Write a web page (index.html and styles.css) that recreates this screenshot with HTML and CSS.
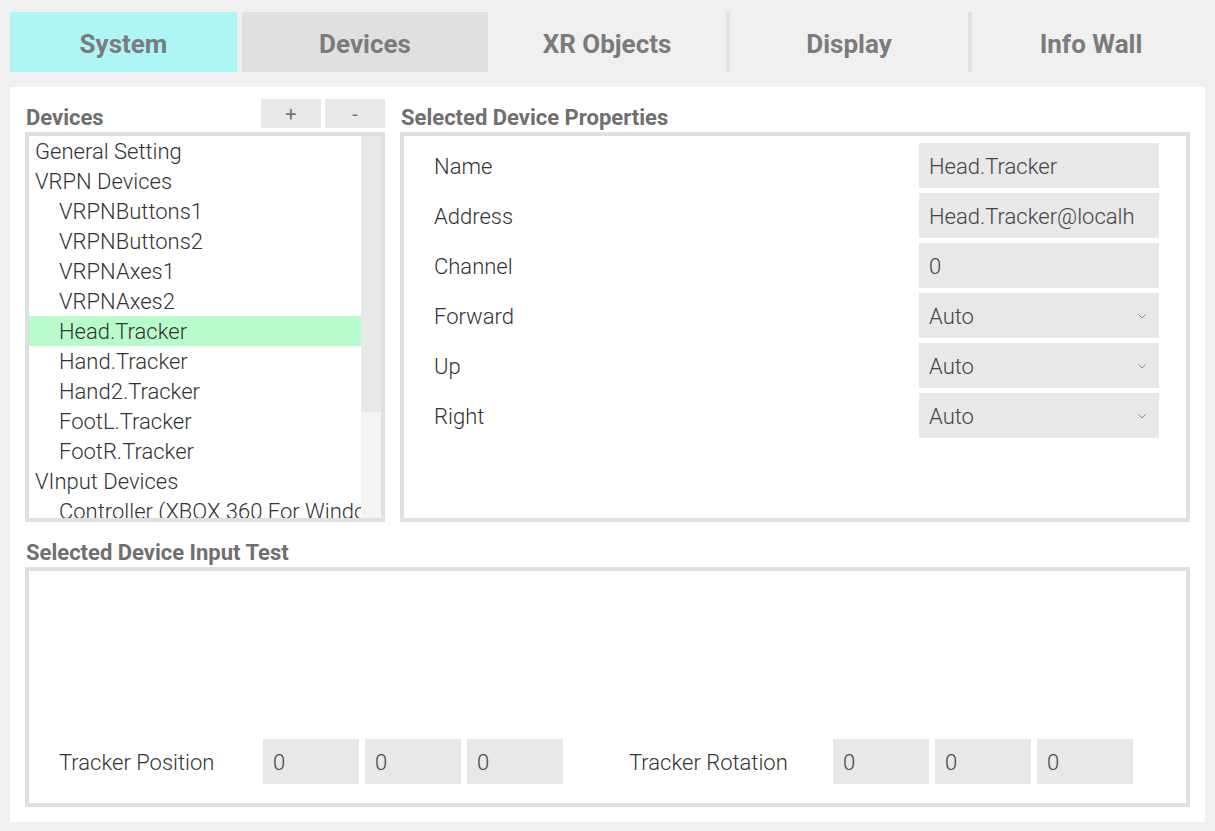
FILE: index.html
```html
<!DOCTYPE html>
<html>
<head>
<meta charset="utf-8">
<title>Settings</title>
<link rel="stylesheet" href="styles.css">
</head>
<body>
<div class="tabs">
  <div class="tab tab-system">System</div>
  <div class="tab tab-devices">Devices</div>
  <div class="tab tab-plain">XR Objects</div>
  <div class="tab-sep"></div>
  <div class="tab tab-plain">Display</div>
  <div class="tab-sep"></div>
  <div class="tab tab-plain">Info Wall</div>
</div>

<div class="main">
  <div class="top">
    <div class="left-col">
      <div class="col-head">
        <div class="heading">Devices</div>
        <div class="btns">
          <div class="btn">+</div>
          <div class="btn">-</div>
        </div>
      </div>
      <div class="list-box">
        <div class="list">
          <div class="item l0">General Setting</div>
          <div class="item l0">VRPN Devices</div>
          <div class="item l1">VRPNButtons1</div>
          <div class="item l1">VRPNButtons2</div>
          <div class="item l1">VRPNAxes1</div>
          <div class="item l1">VRPNAxes2</div>
          <div class="item l1 selected">Head.Tracker</div>
          <div class="item l1">Hand.Tracker</div>
          <div class="item l1">Hand2.Tracker</div>
          <div class="item l1">FootL.Tracker</div>
          <div class="item l1">FootR.Tracker</div>
          <div class="item l0">VInput Devices</div>
          <div class="item l1">Controller (XBOX 360 For Windo</div>
        </div>
        <div class="scrollbar"><div class="thumb"></div></div>
      </div>
    </div>
    <div class="right-col">
      <div class="col-head"><div class="heading">Selected Device Properties</div></div>
      <div class="props-box">
        <div class="prop"><div class="prop-label">Name</div><div class="field">Head.Tracker</div></div>
        <div class="prop"><div class="prop-label">Address</div><div class="field">Head.Tracker@localh</div></div>
        <div class="prop"><div class="prop-label">Channel</div><div class="field">0</div></div>
        <div class="prop"><div class="prop-label">Forward</div><div class="field select"><span>Auto</span><svg class="chev" width="8" height="5" viewBox="0 0 8 5"><polyline points="0.5,0.5 4,4 7.5,0.5" fill="none" stroke="#8a8a8a" stroke-width="1"/></svg></div></div>
        <div class="prop"><div class="prop-label">Up</div><div class="field select"><span>Auto</span><svg class="chev" width="8" height="5" viewBox="0 0 8 5"><polyline points="0.5,0.5 4,4 7.5,0.5" fill="none" stroke="#8a8a8a" stroke-width="1"/></svg></div></div>
        <div class="prop"><div class="prop-label">Right</div><div class="field select"><span>Auto</span><svg class="chev" width="8" height="5" viewBox="0 0 8 5"><polyline points="0.5,0.5 4,4 7.5,0.5" fill="none" stroke="#8a8a8a" stroke-width="1"/></svg></div></div>
      </div>
    </div>
  </div>

  <div class="bottom-head"><div class="heading">Selected Device Input Test</div></div>
  <div class="test-box">
    <div class="tracker-row">
      <div class="tr-label">Tracker Position</div>
      <div class="tr-fields">
        <div class="tr-field">0</div><div class="tr-field">0</div><div class="tr-field">0</div>
      </div>
      <div class="tr-label tr-label-rot">Tracker Rotation</div>
      <div class="tr-fields">
        <div class="tr-field">0</div><div class="tr-field">0</div><div class="tr-field">0</div>
      </div>
    </div>
  </div>
</div>
</body>
</html>
```

FILE: styles.css
```css
html, body {
  margin: 0;
  padding: 0;
}
body {
  background: #f0f0f0;
  width: 1215px;
  height: 831px;
  overflow: hidden;
  font-family: Roboto, "Liberation Sans", sans-serif;
}

/* ---------- tabs ---------- */
.tabs {
  display: flex;
  padding: 12px 0 0 10px;
  height: 60px;
}
.tab {
  height: 60px;
  box-sizing: border-box;
  padding-top: 4px;
  display: flex;
  align-items: center;
  justify-content: center;
  font-weight: bold;
  font-size: 26px;
  color: #7b7b7b;
}
.tab-system {
  width: 227px;
  background: #aef6f6;
  margin-right: 5px;
}
.tab-devices {
  width: 246px;
  background: #e0e0e0;
}
.tab-plain {
  width: 238px;
}
.tab-sep {
  width: 4px;
  height: 60px;
  background: #e2e2e2;
}

/* ---------- main panel ---------- */
.main {
  margin: 15px 0 0 10px;
  width: 1195px;
  height: 735px;
  background: #ffffff;
  padding: 12px 0 0 15px;
  box-sizing: border-box;
}
.top {
  display: flex;
  gap: 15px;
}
.heading {
  font-weight: bold;
  font-size: 22px;
  color: #6f6f6f;
  line-height: 22px;
}
.col-head {
  height: 33px;
  display: flex;
  align-items: flex-start;
  justify-content: space-between;
}
.col-head .heading {
  margin-top: 8px;
  margin-left: 1px;
}
.left-col {
  width: 360px;
}
.btns {
  display: flex;
  gap: 4px;
}
.btn {
  width: 60px;
  height: 29px;
  background: #e8e8e8;
  color: #777;
  font-size: 20px;
  display: flex;
  align-items: center;
  justify-content: center;
}

/* ---------- device list ---------- */
.list-box {
  width: 360px;
  height: 390px;
  border: 4px solid #e0e0e0;
  box-sizing: border-box;
  display: flex;
  overflow: hidden;
  background: #fff;
}
.list {
  width: 332px;
  overflow: hidden;
}
.item {
  height: 30px;
  line-height: 31px;
  font-size: 22px;
  font-weight: 300;
  color: #333;
  white-space: nowrap;
}
.item.l0 { padding-left: 6px; }
.item.l1 { padding-left: 30px; }
.item.selected { background: #b9fccb; }
.scrollbar {
  width: 20px;
  background: #f4f4f4;
}
.thumb {
  height: 276px;
  background: #e8e8e8;
}

/* ---------- properties ---------- */
.right-col {
  width: 790px;
}
.props-box {
  width: 790px;
  height: 390px;
  border: 4px solid #e0e0e0;
  box-sizing: border-box;
  padding: 7px 27px 0 30px;
  display: flex;
  flex-direction: column;
  gap: 5px;
}
.prop {
  display: flex;
  justify-content: space-between;
  align-items: center;
  height: 45px;
}
.prop-label {
  font-size: 22px;
  font-weight: 300;
  color: #333;
  padding-top: 2px;
}
.field {
  width: 240px;
  height: 45px;
  background: #e8e8e8;
  box-sizing: border-box;
  padding: 2px 13px 0 10px;
  display: flex;
  align-items: center;
  font-size: 22px;
  font-weight: 300;
  color: #444;
  white-space: nowrap;
  overflow: hidden;
}
.field.select {
  justify-content: space-between;
}
.chev {
  display: block;
  margin-top: 0;
}

/* ---------- input test ---------- */
.bottom-head {
  height: 45px;
  display: flex;
  align-items: flex-start;
}
.bottom-head .heading {
  margin-top: 20px;
  margin-left: 1px;
}
.test-box {
  width: 1165px;
  height: 240px;
  border: 4px solid #e0e0e0;
  box-sizing: border-box;
  display: flex;
  flex-direction: column;
  justify-content: flex-end;
  padding: 0 0 19px 30px;
}
.tracker-row {
  display: flex;
  align-items: center;
  height: 45px;
}
.tr-label {
  width: 204px;
  font-size: 22px;
  font-weight: 300;
  color: #333;
  padding-top: 2px;
}
.tr-label-rot {
  margin-left: 66px;
}
.tr-fields {
  display: flex;
  gap: 6px;
}
.tr-field {
  width: 96px;
  height: 45px;
  background: #e8e8e8;
  box-sizing: border-box;
  padding: 2px 0 0 10px;
  display: flex;
  align-items: center;
  font-size: 22px;
  font-weight: 300;
  color: #444;
}
```
